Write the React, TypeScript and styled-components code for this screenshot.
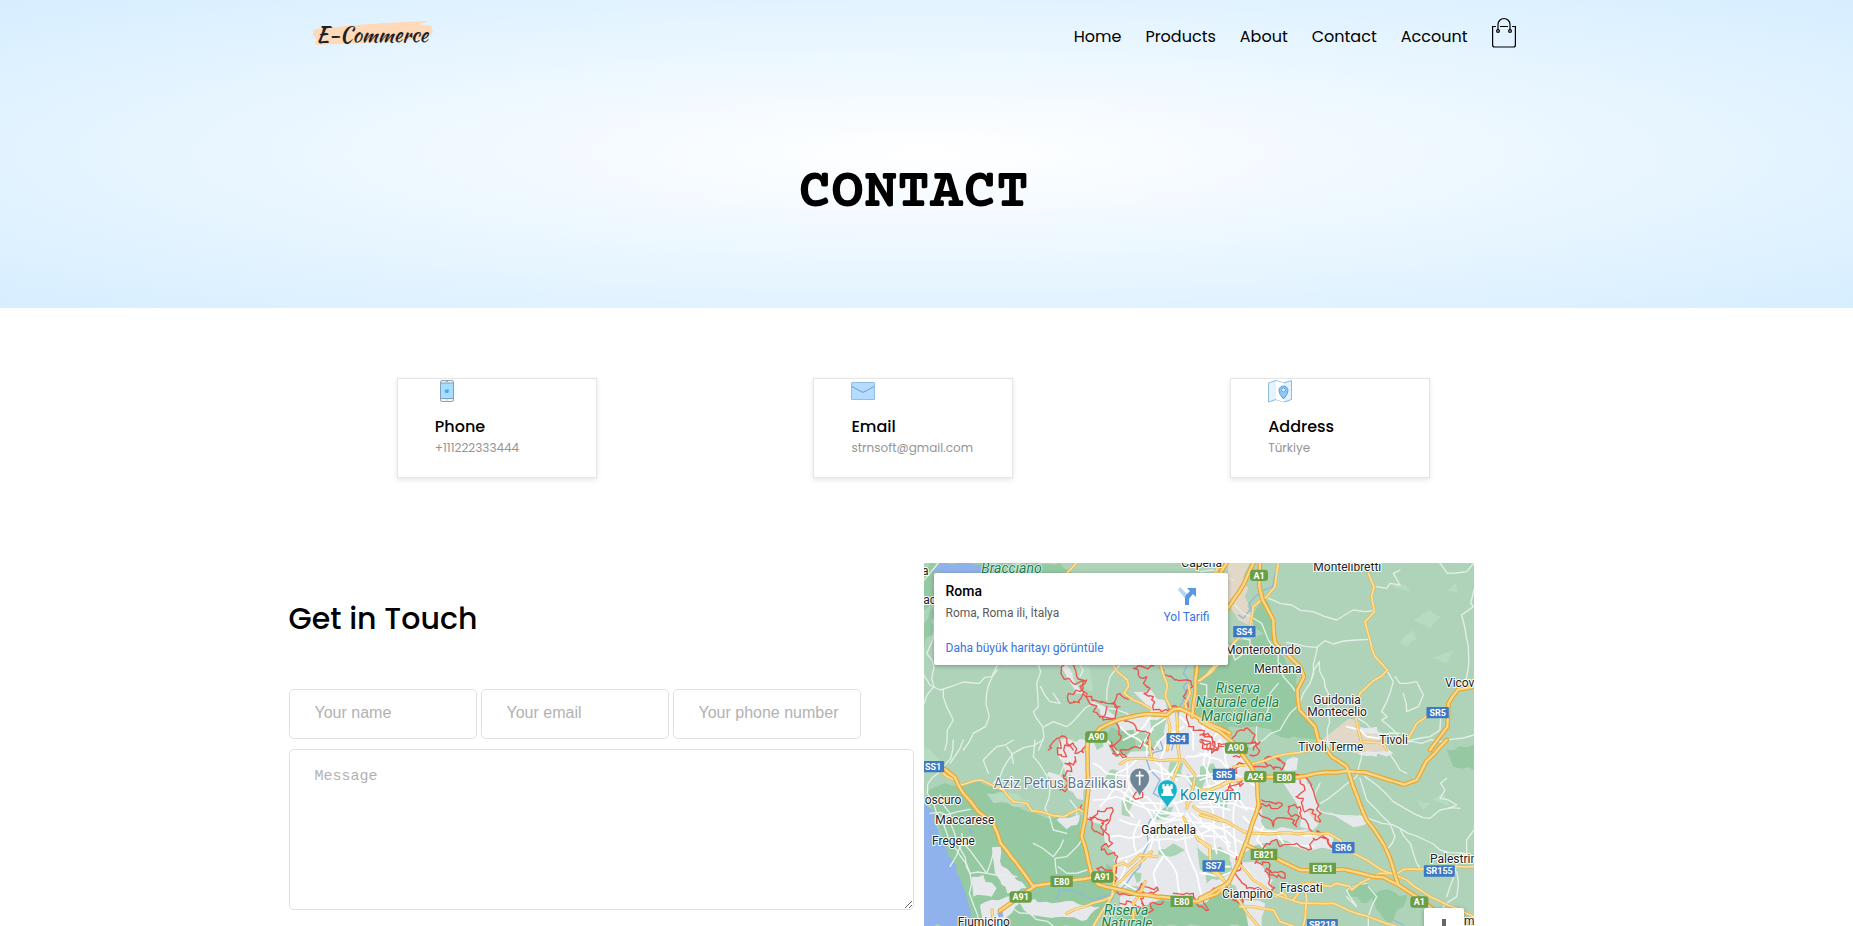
import React from "react";
import styled, { createGlobalStyle } from "styled-components";

const GlobalStyle = createGlobalStyle`
  *, *::before, *::after { box-sizing: border-box; }
  body {
    margin: 0;
    background: #fff;
    color: #000;
    font-family: Poppins, Inter, "Open Sans", sans-serif;
    font-size: 16px;
  }
`;

const Page = styled.div`
  height: 100vh;
  overflow: hidden auto;
  scrollbar-width: none;
`;

const Hero = styled.div`
  height: 308px;
  padding-right: 26px;
  background: radial-gradient(#fff, #d6eeff);
`;

const Container = styled.div`
  max-width: 1250px;
  margin: 0 auto;
`;

const Header = styled.header`
  display: flex;
  align-items: center;
  justify-content: space-between;
  height: 66px;
  padding: 0 23px 0 23px;
`;

const HomeLink = styled.a`
  display: block;
  height: 32px;
  svg { display: block; }
`;

const Nav = styled.nav`
  display: flex;
  align-items: center;
  gap: 24px;
`;

const NavLink = styled.a`
  margin-top: 7px;
  color: #000;
  font-size: 16px;
  line-height: 24px;
  text-decoration: none;
`;

const BagButton = styled.button`
  display: block;
  width: 24px;
  height: 34px;
  padding: 0 0 2px;
  border: 0;
  background: none;
  svg { display: block; }
`;

const PageTitle = styled.h1`
  margin: 96px 0 0;
  font: 700 55px/64px "Courier Prime", "Courier New", "Liberation Mono", monospace;
  text-align: center;
`;

const Main = styled.main`
  padding: 70px 26px 0 0;
`;

const Cards = styled.div`
  display: grid;
  grid-template-columns: repeat(3, 1fr);
  justify-items: center;
`;

const Card = styled.section`
  width: 200px;
  height: 100px;
  padding: 0 37px;
  border: 1px solid #e5e5e5;
  box-shadow: 0 2px 5px rgba(0, 0, 0, 0.1);
  svg { display: block; }
`;

const CardTitle = styled.h2`
  margin: 12px 0 0;
  font-size: 16px;
  font-weight: 500;
  line-height: 24px;
`;

const CardText = styled.p`
  margin: 0;
  color: #959595;
  font-size: 12px;
  font-weight: 400;
  line-height: 18px;
`;

const Columns = styled.div`
  display: grid;
  grid-template-columns: 1fr 1fr;
  margin-top: 85px;
`;

const FormTitle = styled.h2`
  margin: 35px 0 49px;
  font-size: 30px;
  font-weight: 500;
  line-height: 42px;
`;

const Fields = styled.div`
  display: flex;
  gap: 4px;
`;

const Field = styled.input`
  width: 188px;
  height: 50px;
  padding: 0 20px 3px 25px;
  border: 1px solid #e1e1e1;
  border-radius: 5px;
  font: 16px/24px "Liberation Sans", Arial, sans-serif;
  &::placeholder { color: #b2b2b2; }
`;

const Message = styled.textarea`
  display: block;
  width: 100%;
  height: 161px;
  margin-top: 10px;
  padding: 17px 25px;
  border: 1px solid #e1e1e1;
  border-radius: 5px;
  font: 15px/20px "Liberation Mono", monospace;
  resize: both;
  &::placeholder { color: #b2b2b2; }
`;

const MapFrame = styled.div`
  position: relative;
  width: 88%;
  height: 450px;
  margin-left: 10px;
  overflow: hidden;
  background: #aed3b9;
  font-family: Roboto, sans-serif;
`;

const MapDrawing = styled.svg`
  display: block;
  width: 550px;
  height: 450px;
  font-family: Roboto, sans-serif;
`;

const PlaceCard = styled.section`
  position: absolute;
  top: 10px;
  left: 10px;
  display: flex;
  justify-content: space-between;
  width: 294px;
  height: 92px;
  padding: 8px 18px 8px 12px;
  border-radius: 2px;
  background: #fff;
  box-shadow: 0 1px 4px rgba(0, 0, 0, 0.3);
  color: #5b5b5b;
  font-size: 12px;
`;

const PlaceName = styled.h3`
  margin: 0;
  color: #000;
  font-size: 14px;
  font-weight: 500;
  line-height: 20px;
`;

const PlaceAddress = styled.p`
  margin: 2px 0 15px;
  line-height: 20px;
`;

const MapLink = styled.a`
  color: #3574e2;
  line-height: 20px;
  text-decoration: none;
`;

const Directions = styled(MapLink)`
  display: flex;
  flex-direction: column;
  align-items: center;
  gap: 1px;
  padding-top: 5px;
`;

const ZoomButton = styled.button`
  position: absolute;
  top: 345px;
  right: 10px;
  width: 40px;
  height: 40px;
  padding: 0;
  border: 0;
  border-radius: 2px;
  background: #fff;
  box-shadow: 0 1px 4px rgba(0, 0, 0, 0.3);
  svg { display: block; margin: 0 auto; }
`;

/* ---------- map data: four tiles, three units to the pixel ---------- */

type Tile = {
  x: number;
  y: number;
  forest: string[];
  meadow: string[];
  urban: string[];
  sand: string[];
  water: string[];
  park: string[];
  streams: string[];
  lanes: string[];
  streets: string[];
  border: string[];
  roads: string[];
  highways: string[];
};

const tiles: Tile[] = [
  {
    x: -12, y: -9,
    forest: ["12,55 30,9 420,9 470,60 42,60 42,130 12,150", "820,310 930,250 930,520 880,480 820,460", "12,190 36,140 40,200 12,260"],
    meadow: ["425,314 505,314 520,395 470,395 440,350"],
    urban: ["590,485 640,470 740,462 800,455 930,520 930,570 640,570", "700,405 735,420 740,460 690,460", "780,455 830,480 800,500", "640,395 690,385 705,420 740,460 700,455", "420,314 440,314 480,390 530,430 590,470 560,480 510,420 470,400"],
    sand: [],
    water: ["62,9 240,9 232,40 30,40"],
    park: ["725,360 780,350 800,400 770,440 730,420", "690,480 740,470 735,530 700,550", "650,510 700,520 720,570 600,570"],
    streams: ["800,318 790,340 806,360 790,380 800,400 780,440 772,480 775,520 755,570"],
    lanes: ["232,315 215,350 195,352 178,370 130,366 60,390 30,375 12,345", "355,315 362,335 350,370 355,440 340,455 368,500 372,530 356,570", "232,330 200,400 208,470 196,500 160,520 130,570", "42,180 38,240 20,280 36,300 42,380 12,430", "70,390 80,440 100,480 82,510 75,570", "362,380 390,425 420,430 400,400", "372,500 400,485 440,500 520,430 560,445 620,460 660,500 700,510", "480,350 490,330 480,315", "600,315 570,350 560,420", "12,60 55,9", "260,315 280,300"],
    streets: ["690,470 650,520 610,540", "745,470 700,500 660,560", "780,470 820,520 820,570", "850,490 860,570", "600,500 680,560", "790,500 720,540 700,570", "900,515 850,550"],
    border: ["432,316 425,345 460,370 490,365 480,395 446,400 450,430 478,428 490,398 530,440 520,455 550,480 585,478 590,450 575,430 600,400 625,418", "460,316 470,350 500,360 480,380 500,410 560,430 600,440", "700,318 640,325 655,345 680,350 670,370 690,385 672,400 700,410 700,450 745,452 750,440 805,440 790,410 818,380 800,360 765,360 720,325", "560,440 550,470 590,490 600,540 570,560 590,570", "590,480 640,490 650,510 690,520 680,550 700,570", "385,570 400,545 425,528 440,550 460,570", "800,450 806,500 840,510 870,530 890,570"],
    roads: ["580,315 592,335 622,360 626,378 612,400 640,420 690,445", "722,315 742,375 736,410 755,450", "805,375 810,400 796,430 800,450", "930,280 870,340 832,365", "740,465 750,500 742,570", "770,460 775,570", "440,40 470,9", "885,40 900,9"],
    highways: ["920,9 880,80 832,310 826,360 826,400 817,470", "500,570 505,540 540,505 600,478 680,462 740,465 760,448 780,446 800,455 850,482 930,520"],
  },
  {
    x: 828, y: -9,
    forest: ["84,250 130,240 195,220 235,270 290,350 295,440 350,500 345,540 240,530 170,500 100,500 0,470 0,340", "145,190 190,110 215,170 225,250 190,220"],
    meadow: ["640,180 690,150 720,170 690,205", "600,250 640,210 650,240 620,260", "740,90 770,65 775,100", "575,80 620,75 630,95", "690,290 760,270 740,310"],
    urban: ["470,500 530,500 535,540 480,545", "0,490 60,520 110,570 0,570"],
    sand: ["84,9 150,9 130,50 145,85 135,110 160,200 115,180 84,130", "435,485 470,480 480,510 530,520 545,550 500,570 400,550 355,560 365,540"],
    water: [],
    park: [],
    streams: ["225,40 218,80 165,110 148,130 152,150", "150,150 130,175 115,165"],
    lanes: ["200,112 240,130 340,155 410,180 460,150 520,152", "260,248 350,262 375,242 400,252 470,240 510,238", "352,262 330,370 310,400 270,460 240,510 190,540 150,560", "105,135 185,190 205,240 235,275 250,350 290,400", "560,330 580,365 545,455 562,470 545,480 590,520 600,545", "822,90 812,130 820,140 785,165 795,205 805,260 800,350 790,390", "335,355 358,305 375,380 385,400 388,570", "585,350 600,370 650,365 670,405 655,440 620,455 610,400", "720,9 742,40 800,35 822,9", "600,545 720,545 822,525", "170,500 175,570", "465,470 520,515 600,520", "0,370 20,375 20,410 0,430", "90,260 105,300 150,260 150,240 130,235", "530,80 560,85 570,70 600,75 580,40 600,30", "235,370 210,400 200,460 170,480", "722,470 720,510 690,530 600,540", "100,60 40,30 0,35"],
    streets: ["480,510 500,530 540,535", "440,500 480,510"],
    border: ["0,525 35,530 40,570", "90,540 135,505 160,520 155,550 180,545 160,570", "0,545 25,570"],
    roads: ["505,40 522,80 515,110 524,155 495,185 510,240 525,290 562,330 480,400 465,440 475,510 490,570", "235,9 225,80 200,110 160,140 150,200 100,250 60,300 0,362", "690,460 650,490 625,535 555,550 490,545", "550,550 560,570"],
    highways: ["160,9 130,75 84,145", "180,9 178,80 188,120 220,180 225,248 300,320 312,350 292,390 298,450 345,500 362,570", "822,380 775,388 745,430 742,500 690,570", "0,482 60,515 115,560"],
  },
  {
    x: -12, y: 531,
    forest: ["20,165 60,135 140,135 170,122 250,155 300,205 400,235 440,230 485,225 485,290 515,410 580,440 580,480 520,558 150,558 70,300", "545,400 560,370 590,385 585,430", "660,500 720,480 850,490 930,450 930,558 540,558"],
    meadow: ["200,160 280,160 330,180 310,200 220,190", "12,20 60,60 30,100 12,90"],
    urban: ["418,0 505,0 505,90 440,110 415,50", "455,90 500,90 490,180 445,150", "505,0 930,0 930,440 850,490 740,470 660,440 600,450 585,420 588,350 555,310 555,270 500,240 505,80", "215,322 242,320 245,378 290,420 320,445 262,460 225,400", "155,410 190,405 230,445 215,470 160,470", "180,495 260,470 380,485 470,490 540,500 500,540 430,530 330,525 300,490 230,558 190,558", "410,240 480,225 470,255 440,268", "385,95 430,115 425,125 380,105", "600,470 700,440 730,470 650,510 600,500"],
    sand: [],
    water: ["12,192 35,208 70,300 110,380 140,470 155,558 12,558", "150,265 160,275 155,282 148,275", "232,518 248,515 250,530 236,532"],
    park: ["520,0 550,0 550,20 530,30", "750,65 790,70 785,110 750,115 745,90", "800,100 860,115 845,150 810,140", "605,180 640,180 630,230 605,225", "715,330 760,310 795,330 750,350 715,345", "830,310 850,340 880,350 890,400 840,390", "850,360 930,340 930,400 860,430", "570,90 600,95 590,125 555,115", "700,215 760,200 750,225 710,240", "860,170 880,170 870,180", "640,395 665,400 650,430"],
    streams: ["680,60 690,90 720,120 700,160 740,200 690,240 680,270 685,310 660,380 620,430 590,460 520,480 480,460 420,450 410,475", "720,0 730,30 670,55"],
    lanes: ["100,0 92,55 35,115 22,160 50,220 110,330 150,400 148,460 180,558", "60,165 90,220 110,300 150,400 200,400 130,310 125,280", "130,0 120,25 90,70", "345,0 340,50 370,90 390,140 375,205 400,270 440,280", "490,290 440,350 405,355 410,400", "205,100 190,60 230,20 280,0", "455,30 430,80 410,135", "220,130 240,110 250,85 280,40 370,0", "30,220 80,225 150,208", "150,290 120,320 90,380", "220,340 200,400 290,410", "280,70 275,40 260,20", "340,310 400,350 430,300", "250,500 330,520 400,558", "415,380 440,400 500,390", "470,230 470,205 450,180"],
    streets: ["520,70 560,100 630,110 700,90 800,110 930,90", "505,130 600,150 660,190 750,190 830,180 930,160", "520,180 590,170 690,210 780,220", "560,0 620,60 630,150 690,220 720,330 770,400 780,470", "740,0 720,60 730,130 760,180 790,240 800,330 830,400 850,480", "600,240 680,260 760,240 870,250 930,280", "570,290 660,290 700,240", "590,360 650,340 690,300 770,300 870,270", "650,60 590,100 580,150 540,200", "870,0 850,70 890,130 930,140", "780,60 740,120 720,210 700,240 690,330", "820,140 880,160 930,170", "820,200 880,200 930,210", "815,220 930,320", "800,220 860,320", "800,110 840,150 900,200", "690,0 680,50", "900,0 880,40 800,50", "620,360 600,420 650,450", "630,180 680,170 720,220 800,230", "700,60 770,120", "660,240 640,290 650,340", "730,350 700,400 710,440", "830,200 850,260 930,260", "700,215 750,240 790,220", "640,110 610,180 640,230", "780,250 830,280 910,290 930,310", "850,400 890,380 930,380"],
    border: ["418,0 415,45 440,50 435,15 460,10 465,40 490,38 500,10", "465,50 460,75 435,70 455,95 430,105 445,130 420,150 435,155 450,140", "575,5 578,40 620,50 600,30 660,25 670,5", "485,195 492,235 515,242 525,275 550,285 545,250 565,240 510,232 560,205 580,212 570,240 558,255 560,280 578,310 545,320 560,340 585,345 588,400 555,390 545,380 530,385 545,400 585,410 580,450", "590,455 640,465 665,430 715,450 700,460 665,455 670,510 640,490 600,490", "665,490 680,520 700,510 690,490 730,485", "760,460 820,460 830,490 865,510 850,480 930,430", "640,170 650,155 668,158 668,172 640,172", "845,0 870,10 860,25 890,30 895,10 925,20"],
    roads: ["60,92 125,135 165,122 185,120 250,150 280,185 320,190 335,212 430,230 478,208 500,222", "600,72 625,57 690,57 720,62 790,60 825,105 820,140 800,205", "770,0 780,65 755,130 720,165", "690,0 695,50", "580,445 582,378 610,370 625,378 660,345 712,350", "695,335 580,440 575,470 440,520", "676,425 640,490 640,540", "790,232 835,300 870,325 872,390 910,420", "820,200 840,215 930,250", "580,460 520,558", "218,535 216,510", "800,190 850,160 930,120"],
    highways: ["12,72 75,88 105,112 130,160 175,215 222,255 242,310 290,370 340,440", "342,440 300,470 240,512", "340,438 380,432 520,412", "503,0 503,60 505,150 495,240 485,290 500,340 518,415 535,433 580,445 650,463 740,472 830,485 890,462 930,420"],
  },
  {
    x: 828, y: 531,
    forest: ["515,470 550,450 620,465 610,500 570,550 530,510", "0,480 90,440 130,480 150,558 0,558", "440,440 500,430 530,460 500,490 450,470", "740,30 822,15 822,90 760,80"],
    meadow: ["700,180 730,160 750,200", "650,180 690,190 670,210"],
    urban: ["0,0 80,0 130,50 165,90 180,180 190,260 300,270 400,290 400,330 300,325 240,300 190,310 120,340 120,370 180,370 220,420 215,450 130,470 90,430 0,480", "250,130 320,110 350,180 360,245 340,270 300,260 290,190", "380,212 430,225 480,225 505,250 460,262", "130,480 195,490 185,558 145,558", "100,370 150,370 215,420 190,445 130,440", "530,20 580,40 560,50 520,40", "260,60 295,55 290,90 250,90", "430,0 540,10 530,50 480,45"],
    sand: ["320,210 352,210 362,250 350,250", "380,0 540,0 560,30 460,40 400,20"],
    water: [],
    park: ["0,80 40,70 50,90 20,120 0,120", "30,330 60,320 95,370 80,400 30,360", "60,170 85,180 80,205 60,200", "0,340 20,350 25,380 0,380"],
    streams: ["580,540 610,555"],
    lanes: ["362,190 470,110 485,50 480,20", "495,110 530,135 580,185 640,220 690,235 720,210 780,205", "740,115 722,130 735,150 720,175 770,195 745,205", "360,215 490,230 600,265 720,330 822,350", "600,265 640,340 660,385", "480,115 500,180 570,250 585,290 560,330", "822,270 800,300 800,340 770,370 740,470", "560,20 600,90 620,100", "770,395 770,470 730,500 740,558", "440,470 470,500 450,470 440,450 500,430", "505,440 530,470 515,500 505,558", "190,340 160,370", "360,130 345,160 360,215"],
    streets: ["0,40 60,60 100,100 170,140", "0,150 70,120 160,120", "0,190 100,190 180,210", "0,260 50,260 130,310", "60,0 90,100 70,220 85,330 120,350", "120,120 100,230 110,360", "0,120 60,110 150,70", "0,310 60,330 120,360", "30,30 20,120 40,220 50,340", "0,400 60,410 120,380", "190,260 170,300 220,340", "230,280 250,310 340,320", "120,370 180,430 230,470", "110,390 60,440", "130,230 160,260 190,275 350,285", "90,120 140,210"],
    border: ["0,0 30,5 35,40 70,20", "100,50 140,40 135,10 165,5 175,40 150,45", "90,85 115,80 110,100 75,95 80,120 110,125 130,115", "110,75 200,80 195,55 225,50 255,70 245,90 200,75", "90,130 100,150 75,155 85,140 130,130", "285,105 325,120 345,170 362,245 345,240 340,210 310,210 310,175 288,170 315,150 300,120", "185,180 245,190 235,205 180,195 178,220 205,235 220,260 230,235 270,235 290,260 298,230 270,225 265,200 300,200 305,235 325,255 335,275 365,280 405,325 375,295 340,295 325,330 290,310 240,320 230,298 200,310 190,330", "170,345 165,370 210,375 210,390 255,400 255,415 220,405 200,385 215,440 225,465 185,450 140,445 105,400 120,390 125,370 110,350", "0,475 75,430 100,480 130,485 120,465"],
    roads: ["0,225 80,245 130,275 180,280 385,280 420,300 440,330 470,345 500,360 545,390 620,420 690,470 822,530", "590,402 610,388 660,388 740,380 822,380", "110,365 160,420 230,465 310,490 400,490 470,520 590,558", "280,480 295,460 320,430 390,440 410,430 450,440 455,450 480,430 540,400 580,400", "100,80 200,60 260,42 330,30", "0,150 30,150 90,125 165,110", "0,300 30,320 32,380 75,425", "230,465 250,460 260,470", "310,430 320,480 310,558", "100,460 160,540 175,558", "120,500 160,500 220,510 240,545 280,558"],
    highways: ["112,20 150,75 170,110 176,195 140,305 115,370 85,430 0,475", "165,108 290,112 350,100 440,93 495,97 560,118 612,134 650,120 678,65 740,0", "360,0 395,50 440,80 470,165 500,240 555,320 575,370 595,435", "135,313 205,345 300,390 430,388 520,410 550,412 595,435 650,470 760,558"],
  },
];

// Adds small kinks to a coarse outline: `step` is their spacing, `size` their depth.
const kinked = (line: string, step: number, size: number) => {
  const points = line.split(" ").map((pair) => pair.split(",").map(Number));
  let seed = points[0][0] + points[0][1] + 7;
  const noise = () => {
    seed = (seed * 9301 + 49297) % 233280;
    return seed / 233280 - 0.5;
  };
  return points
    .flatMap(([x, y], i) => {
      const next = points[i + 1];
      if (!next) return [`${x},${y}`];
      const count = Math.max(1, Math.round(Math.hypot(next[0] - x, next[1] - y) / step));
      return Array.from({ length: count }, (_, n) => {
        const t = n / count;
        const jitter = n === 0 ? 0 : size;
        return `${Math.round(x + (next[0] - x) * t + noise() * jitter)},${Math.round(y + (next[1] - y) * t + noise() * jitter)}`;
      });
    })
    .join(" ");
};

type LayerName = Exclude<keyof Tile, "x" | "y">;

const Areas = ({ name, fill }: { name: LayerName; fill: string }) => (
  <g fill={fill}>
    {tiles.map((tile) => (
      <g key={`${tile.x} ${tile.y}`} transform={`translate(${tile.x} ${tile.y})`}>
        {tile[name].map((points) => <polygon key={points} points={kinked(points, 20, 14)} />)}
      </g>
    ))}
  </g>
);

type LinesProps = { name: LayerName; stroke: string; width: number; step?: number; size?: number };

const Lines = ({ name, stroke, width, step = 30, size = 0 }: LinesProps) => (
  <g fill="none" stroke={stroke} strokeWidth={width} strokeLinejoin="round" strokeLinecap="round">
    {tiles.map((tile) => (
      <g key={`${tile.x} ${tile.y}`} transform={`translate(${tile.x} ${tile.y})`}>
        {tile[name].map((points) => <polyline key={points} points={kinked(points, step, size)} />)}
      </g>
    ))}
  </g>
);

type Label = [text: string, x: number, y: number];

const towns: Label[] = [
  ["a", -6, 37], ["Capena", 772, 11], ["ac", -2, 123], ["Montelibretti", 1168, 25],
  ["Monterotondo", 903, 274], ["Mentana", 991, 331], ["Vicov", 1563, 373],
  ["Guidonia", 1168, 424], ["Montecelio", 1150, 460], ["Tivoli Terme", 1123, 563],
  ["Tivoli", 1366, 543], ["oscuro", 2, 723], ["Maccarese", 34, 783], ["Fregene", 24, 846],
  ["Fiumicino", 101, 1089], ["Garbatella", 652, 813], ["Ciampino", 894, 1005],
  ["Frascati", 1068, 987], ["Palestrin", 1518, 900], ["m", 1620, 1087],
];

const reserves: Label[] = [
  ["Bracciano", 172, 29], ["Riserva", 875, 390], ["Naturale della", 815, 432],
  ["Marcigliana", 832, 474], ["Riserva", 540, 1056], ["Naturale", 532, 1095],
];

const shields: [text: string, x: number, y: number, kind: "motorway" | "state"][] = [
  ["A1", 1005, 37, "motorway"], ["SS4", 961, 206, "state"], ["SR5", 1541, 449, "state"],
  ["A90", 517, 522, "motorway"], ["SS4", 761, 527, "state"], ["A90", 936, 555, "motorway"],
  ["SS1", 27, 611, "state"], ["SR5", 900, 634, "state"], ["A24", 994, 641, "motorway"],
  ["E80", 1081, 643, "motorway"], ["SS7", 869, 909, "state"], ["E821", 1020, 874, "motorway"],
  ["E821", 1196, 916, "motorway"], ["SR6", 1258, 854, "state"], ["SR155", 1546, 924, "state"],
  ["A1", 1486, 1017, "motorway"], ["SR218", 1195, 1085, "state"], ["E80", 413, 955, "motorway"],
  ["A91", 535, 942, "motorway"], ["A91", 290, 1002, "motorway"], ["E80", 773, 1015, "motorway"],
];

const RomeMap = () => (
  <MapDrawing viewBox="0 0 1650 1350" role="img" aria-label="Roma">
    <rect width="1650" height="1350" fill="#aed3b9" />
    <Areas name="forest" fill="#94c9a2" />
    <Areas name="meadow" fill="#b7dbc1" />
    <Areas name="urban" fill="#e6e8ec" />
    <Areas name="sand" fill="#e2d8c8" />
    <Areas name="water" fill="#90b2ec" />
    <Areas name="park" fill="#a9d5b5" />
    <polygon points="563,492 585,505 630,500 636,550 610,575 575,583 560,560 545,520" fill="#94c9a2" />
    <Lines name="streams" stroke="#90b8d8" width={4} size={12} />
    <Lines name="lanes" stroke="#e4efe8" width={4} size={12} />
    <Lines name="streets" stroke="#ffffff" width={5} size={10} />
    <Lines name="border" stroke="#ea544c" width={4} step={10} size={15} />
    <Lines name="roads" stroke="#eab648" width={9} size={5} />
    <Lines name="roads" stroke="#fce0a0" width={5} size={5} />
    <Lines name="highways" stroke="#eba62c" width={14} size={3} />
    <Lines name="highways" stroke="#f7d88c" width={7} size={3} />

    <g fontSize="36" fill="#202124" stroke="#fff" strokeWidth="6" strokeLinejoin="round" paintOrder="stroke">
      {towns.map(([text, x, y]) => <text key={text} x={x} y={y}>{text}</text>)}
    </g>
    <g fontSize="42" fontStyle="italic" fill="#188048" stroke="#e3f2e7" strokeWidth="5" strokeLinejoin="round" paintOrder="stroke">
      {reserves.map(([text, x, y]) => <text key={`${text} ${y}`} x={x} y={y}>{text}</text>)}
    </g>
    <g fontSize="42" stroke="#fff" strokeWidth="6" strokeLinejoin="round" paintOrder="stroke">
      <text x="209" y="674" fill="#5f7890">Aziz Petrus Bazilikası</text>
      <text x="768" y="710" fill="#14849c">Kolezyum</text>
    </g>
    <g fontSize="27" fontWeight="700" fill="#fff" textAnchor="middle">
      {shields.map(([text, x, y, kind]) => {
        const width = 28 + text.length * 13;
        return (
          <g key={`${text} ${x}`}>
            <rect x={x - width / 2} y={y - 17} width={width} height="34" rx={text[0] === "A" ? 9 : 2} fill={kind === "state" ? "#3c78c4" : "#6b9f45"} />
            <text x={x} y={y + 10}>{text}</text>
          </g>
        );
      })}
    </g>
    <g stroke="#fff" strokeWidth="2">
      <path d="M647 704c-3-23-30-32-30-59a30 30 0 0 1 60 0c0 27-27 36-30 59z" fill="#6f8494" />
      <path d="M730 739c-3-23-30-32-30-59a30 30 0 0 1 60 0c0 27-27 36-30 59z" fill="#17b2cc" />
    </g>
    <path d="M647 625v42M635 638h24" stroke="#fff" strokeWidth="5" />
    <path d="M715 664h7v6h5v-6h7v6h5v-6h7v14h-5l3 14h4v7h-36v-7h4l3-14h-4z" fill="#fff" />
  </MapDrawing>
);

/* ---------- icons ---------- */

const Logo = () => (
  <svg width="122" height="32" viewBox="0 0 122 32" role="img" aria-label="E-Commerce">
    <path d="M1 14l3-2 30-3 38-3 42-2 1 1-9 2 14 2-1 2 2 3-1 3-4 2-8 3-20 2-36 2-26 1-22 1-1-3 2-2-4-5z" fill="#ffd9b8" />
    <text x="4" y="25" fill="#202124" fontFamily="'Kaushan Script', 'Caveat Brush', Caveat, Lato, sans-serif" fontSize="21">E-Commerce</text>
  </svg>
);

const BagIcon = () => (
  <svg width="24" height="32" viewBox="0 0 24 32" fill="none" stroke="#000" strokeWidth="1.2">
    <path d="M4 10.500H.6V29q0 2 2 2h18.800q2 0 2-2V10.500H20M8 10.500h8" />
    <path d="M6 14V8.500a6 6 0 0 1 12 0V14" />
    <circle cx="6" cy="15" r="1.400" />
    <circle cx="18" cy="15" r="1.400" />
  </svg>
);

const PhoneIcon = () => (
  <svg width="24" height="24" viewBox="0 0 24 24">
    <rect x="5.500" y="1.500" width="13" height="21" rx="1.500" fill="#f2f6f9" stroke="#8ca7bd" />
    <path d="M5.500 4h13v15.500h-13z" fill="#a8ddff" stroke="#7f9fba" />
    <path d="M11 2.500h2M11.500 21h1" stroke="#9ab0c2" />
    <path d="M12 10.700c2.500-.8 2.400.7 1.600 1.300.3 1.600-.8 2.400-1.700 1.900-1.500.6-2.200-.7-2.200-1.900 0-1.500 1.300-1.700 2.300-1.300zM12 10.200q.2-1.200 1-1.500" fill="#4aa7e0" />
  </svg>
);

const EmailIcon = () => (
  <svg width="24" height="24" viewBox="0 0 24 24" stroke="#92bbe8">
    <rect x=".500" y="3.500" width="23" height="17" rx=".500" fill="#b5dcff" />
    <path d="M1 7.500l9 5q2 1.600 4 0l9-5" fill="none" stroke="#5f9fe0" />
  </svg>
);

const AddressIcon = () => (
  <svg width="24" height="24" viewBox="0 0 24 24" stroke="#8bb9e2" strokeLinejoin="round">
    <path d="M.5 4L8 1.500l8 2.500 7.500-2.500V20.500L16 23l-8-2.500L.5 23z" fill="#e3f3ff" />
    <path d="M8 2v18.500l8 2.500V4z" fill="#fff" stroke="none" />
    <path d="M15.500 20q-4.500-5-4.500-8.500a4.500 4.500 0 0 1 9 0q0 3.500-4.500 8.500z" fill="#91c8fa" stroke="#5a9cdd" />
    <circle cx="15.500" cy="11" r="1.900" fill="#fff" stroke="#5a9cdd" />
  </svg>
);

const DirectionsIcon = () => (
  <svg width="20" height="20" viewBox="0 0 20 20">
    <path d="M3 1l8 8-3 3-7-8z" fill="#b4d3f5" />
    <path d="M8 19v-7q0-2 1.500-3.500L13 5l-3-3h9v9l-3-3-3 3.500q-1 1-1 2.500v5z" fill="#5797e4" />
  </svg>
);

const details = [
  { title: "Phone", text: "+111222333444", icon: <PhoneIcon /> },
  { title: "Email", text: "strnsoft@gmail.com", icon: <EmailIcon /> },
  { title: "Address", text: "Türkiye", icon: <AddressIcon /> },
];

const App = () => (
  <>
    <GlobalStyle />
    <Page>
      <Hero>
        <Container>
          <Header>
            <HomeLink href="#home"><Logo /></HomeLink>
            <Nav>
              {["Home", "Products", "About", "Contact", "Account"].map((item) => (
                <NavLink key={item} href={`#${item.toLowerCase()}`}>{item}</NavLink>
              ))}
              <BagButton type="button" aria-label="Cart"><BagIcon /></BagButton>
            </Nav>
          </Header>
          <PageTitle>CONTACT</PageTitle>
        </Container>
      </Hero>
      <Main>
        <Container>
          <Cards>
            {details.map(({ title, text, icon }) => (
              <Card key={title}>
                {icon}
                <CardTitle>{title}</CardTitle>
                <CardText>{text}</CardText>
              </Card>
            ))}
          </Cards>
          <Columns>
            <form>
              <FormTitle>Get in Touch</FormTitle>
              <Fields>
                <Field type="text" aria-label="Your name" placeholder="Your name" />
                <Field type="email" aria-label="Your email" placeholder="Your email" />
                <Field type="tel" aria-label="Your phone number" placeholder="Your phone number" />
              </Fields>
              <Message aria-label="Message" placeholder="Message" />
            </form>
            <MapFrame>
              <RomeMap />
              <PlaceCard>
                <div>
                  <PlaceName>Roma</PlaceName>
                  <PlaceAddress>Roma, Roma ili, İtalya</PlaceAddress>
                  <MapLink href="#map">Daha büyük haritayı görüntüle</MapLink>
                </div>
                <Directions href="#directions">
                  <DirectionsIcon />
                  Yol Tarifi
                </Directions>
              </PlaceCard>
              <ZoomButton type="button" aria-label="Zoom in">
                <svg width="20" height="20" viewBox="0 0 20 20" stroke="#666" strokeWidth="4"><path d="M10 1v18M1 10h18" /></svg>
              </ZoomButton>
            </MapFrame>
          </Columns>
        </Container>
      </Main>
    </Page>
  </>
);

export default App;
